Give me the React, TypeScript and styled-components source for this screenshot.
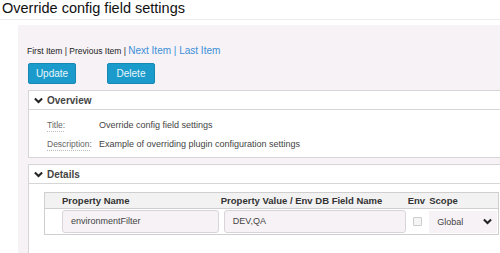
import { createGlobalStyle, styled } from "styled-components"

const Global = createGlobalStyle`
  html, body {
    margin: 0;
    padding: 0;
    background: #fff;
    font-family: "Liberation Sans", Arial, sans-serif;
    overflow: hidden;
  }
`

const Page = styled.div`
  width: 500px;
  height: 253px;
  overflow: hidden;
`

const Header = styled.h1`
  margin: 0;
  height: 20px;
  padding: 0 0 0 2px;
  box-sizing: border-box;
  font-size: 14.5px;
  font-weight: normal;
  color: #111;
  line-height: 16px;
  border-bottom: 1px solid #ececec;
`

const Content = styled.div`
  margin: 5px -40px 0 18px;
  padding: 18px 0 0 10px;
  background: #f6f2f6;
  height: 300px;
`

const Pager = styled.div`
  font-size: 8.5px;
  color: #222;
  height: 16px;
  line-height: 16px;
  margin-left: -1px;
`

const PagerLink = styled.span`
  color: #3d8fd6;
  font-size: 10px;
`

const Buttons = styled.div`
  display: flex;
  gap: 31px;
  margin-top: 4px;
`

const Button = styled.button`
  width: 48px;
  height: 21px;
  padding: 0;
  border: 1px solid #1787b4;
  border-radius: 2px;
  background: #1b9bcb;
  color: #eaf6fb;
  font-family: inherit;
  font-size: 10px;
`

const Panel = styled.div`
  margin-top: ${p => p.$gap}px;
  background: #fff;
  border: 1px solid #d6d6d6;
`

const PanelHead = styled.div`
  height: 18px;
  display: flex;
  align-items: center;
  gap: 4px;
  padding-left: 5px;
  border-bottom: 1px solid #d6d6d6;
  font-size: 10px;
  font-weight: bold;
  color: #444;
`

const Chevron = styled.svg`
  width: 9px;
  height: 7px;
`

const Fields = styled.div`
  padding: 5px 0 4px 18px;
`

const Field = styled.div`
  display: flex;
  height: 19px;
  align-items: center;
  font-size: 9px;
  color: #444;
`

const Label = styled.span`
  width: 52px;
  color: #666;
  text-decoration: underline dotted #bbb;
  text-underline-offset: 3px;
  font-size: 8.5px;
`

const DetailsBody = styled.div`
  padding: 8px 0 30px 15px;
`

const Table = styled.table`
  border-collapse: collapse;
  border: 1px solid #cfcfcf;
  width: 455px;
  font-size: 9.5px;
`

const Th = styled.th`
  text-align: left;
  font-weight: bold;
  color: #333;
  background: #f2f2f2;
  height: 15px;
  padding: 0 0 0 ${p => p.$pl || 0}px;
  border-bottom: 1px solid #cfcfcf;
`

const Td = styled.td`
  padding: 1px 0;
  height: 22px;
`

const Input = styled.div`
  box-sizing: border-box;
  height: 23px;
  width: ${p => p.$w}px;
  margin-left: ${p => p.$ml || 0}px;
  border: 1px solid #d9d4d9;
  border-radius: 3px;
  background: #f6f2f6;
  color: #444;
  font-size: 9px;
  line-height: 21px;
  padding-left: 8px;
`

const Check = styled.div`
  width: 7px;
  height: 7px;
  border: 1px solid #ccc;
  border-radius: 1px;
  background: #f5f5f5;
  margin-left: 5px;
`

const Select = styled.div`
  box-sizing: border-box;
  height: 22px;
  width: 68px;
  margin-left: 4px;
  background: #f6f2f6;
  display: flex;
  align-items: center;
  justify-content: space-between;
  padding: 0 5px 0 8px;
  font-size: 9px;
  color: #444;
`

const Down = () => (
  <Chevron viewBox="0 0 10 7">
    <path d="M1 1.2 L5 5.2 L9 1.2" fill="none" stroke="#222" strokeWidth="2.2" />
  </Chevron>
)

export default function App() {
  return (
    <Page>
      <Global />
      <Header>Override config field settings</Header>
      <Content>
        <Pager>
          First Item | Previous Item | <PagerLink>Next Item | Last Item</PagerLink>
        </Pager>
        <Buttons>
          <Button>Update</Button>
          <Button>Delete</Button>
        </Buttons>
        <Panel $gap={6}>
          <PanelHead><Down />Overview</PanelHead>
          <Fields>
            <Field><Label>Title:</Label>Override config field settings</Field>
            <Field><Label>Description:</Label>Example of overriding plugin configuration settings</Field>
          </Fields>
        </Panel>
        <Panel $gap={6}>
          <PanelHead><Down />Details</PanelHead>
          <DetailsBody>
            <Table>
              <thead>
                <tr>
                  <Th $pl={17}>Property Name</Th>
                  <Th>Property Value / Env DB Field Name</Th>
                  <Th>Env</Th>
                  <Th $pl={4}>Scope</Th>
                </tr>
              </thead>
              <tbody>
                <tr>
                  <Td><Input $w={157} $ml={17}>environmentFilter</Input></Td>
                  <Td><Input $w={182} $ml={3}>DEV,QA</Input></Td>
                  <Td><Check /></Td>
                  <Td><Select>Global<Down /></Select></Td>
                </tr>
              </tbody>
            </Table>
          </DetailsBody>
        </Panel>
      </Content>
    </Page>
  )
}
